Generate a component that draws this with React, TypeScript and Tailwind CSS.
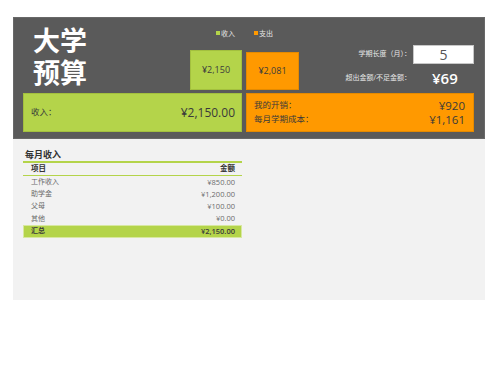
const rows = [
  { item: "工作收入", amount: "¥850.00" },
  { item: "助学金", amount: "¥1,200.00" },
  { item: "父母", amount: "¥100.00" },
  { item: "其他", amount: "¥0.00" },
];

export default function App() {
  return (
    <div className="min-h-[382px] w-[498px] bg-white pt-[17px] pl-[13px] font-['Open_Sans','Noto_Sans_CJK_SC',sans-serif]">
      <div className="w-[472px]">
        {/* header panel */}
        <div className="h-[122px] bg-[#5a5a5a] border border-[#686868] pl-[9px] pr-[10px]">
          <div className="flex h-[75px]">
            <div className="w-[167px] pl-[10px] pt-[6px] text-[27px] leading-[32px] font-bold text-white font-['Noto_Sans_CJK_SC',sans-serif]">
              大学
              <br />
              预算
            </div>

            <div className="w-[109px] flex flex-col">
              <div className="mt-[11px] h-[8px] flex items-center text-[7px] leading-none text-[#e6e6e6]">
                <span className="ml-[26px] w-[4px] h-[4px] bg-[#b4d44a]" />
                <span className="ml-[1px]">收入</span>
                <span className="ml-[19px] w-[4px] h-[4px] bg-[#ff9900]" />
                <span className="ml-[1px]">支出</span>
              </div>
              <div className="mt-[13px] flex items-end gap-[4px]">
                <div className="w-[52px] h-[40px] bg-[#b4d44a] border border-[#a3c03e] flex items-center justify-center text-[9px] text-[#3c3c3c]">
                  ¥2,150
                </div>
                <div className="w-[53px] h-[38px] bg-[#ff9900] border border-[#e58a00] flex items-center justify-center text-[9px] text-[#3c3c3c]">
                  ¥2,081
                </div>
              </div>
            </div>

            <div className="flex-1 flex flex-col items-end pt-[27px]">
              <div className="flex items-center gap-[2px]">
                <span className="text-[7px] text-[#e6e6e6]">学期长度（月）：</span>
                <div className="w-[61px] h-[19px] bg-white border border-[#c8c8c8] flex items-center justify-center text-[14px] text-[#555]">
                  5
                </div>
              </div>
              <div className="mt-[4px] h-[20px] flex items-center">
                <span className="text-[7px] text-[#e6e6e6]">超出金额/不足金额：</span>
                <span className="w-[61px] ml-[2px] pl-[19px] text-[15px] text-white font-semibold">¥69</span>
              </div>
            </div>
          </div>

          <div className="flex gap-[4px] h-[39px]">
            <div className="w-[219px] bg-[#b4d44a] border border-[#a3c03e] pl-[7px] pr-[6px] flex items-center justify-between text-[#3a3a3a]">
              <span className="text-[8.5px]">收入：</span>
              <span className="text-[12px]">¥2,150.00</span>
            </div>
            <div className="flex-1 bg-[#ff9900] border border-[#e58a00] pl-[7px] pr-[8px] flex flex-col justify-center text-[#3a3a3a]">
              <div className="flex items-center justify-between h-[14px]">
                <span className="text-[8.5px]">我的开销：</span>
                <span className="text-[11.5px]">¥920</span>
              </div>
              <div className="flex items-center justify-between h-[14px]">
                <span className="text-[8.5px]">每月学期成本：</span>
                <span className="text-[11.5px]">¥1,161</span>
              </div>
            </div>
          </div>
        </div>

        {/* table panel */}
        <div className="h-[161px] bg-[#f2f2f2] pl-[10px] pt-[10px]">
          <div className="w-[219px]">
            <div className="h-[12px] pl-[2px] flex items-center text-[9px] font-semibold text-[#333]">每月收入</div>
            <div className="h-[1.5px] bg-[#b4d44a]" />
            <div className="h-[12px] px-[8px] pr-[7px] flex items-center justify-between text-[7.5px] font-bold text-[#333]">
              <span>项目</span>
              <span>金额</span>
            </div>
            <div className="h-[1.5px] bg-[#b4d44a]" />
            {rows.map((r) => (
              <div key={r.item} className="h-[12.25px] pl-[8px] pr-[7px] flex items-center justify-between text-[7px] text-[#6b6b6b]">
                <span>{r.item}</span>
                <span className="text-[7.5px]">{r.amount}</span>
              </div>
            ))}
            <div className="h-[13px] bg-[#b4d44a] border border-[#d8e8a0] pl-[7px] pr-[6px] flex items-center justify-between text-[7px] font-semibold text-[#3a3a3a]">
              <span>汇总</span>
              <span className="text-[7.5px]">¥2,150.00</span>
            </div>
          </div>
        </div>
      </div>
    </div>
  );
}
